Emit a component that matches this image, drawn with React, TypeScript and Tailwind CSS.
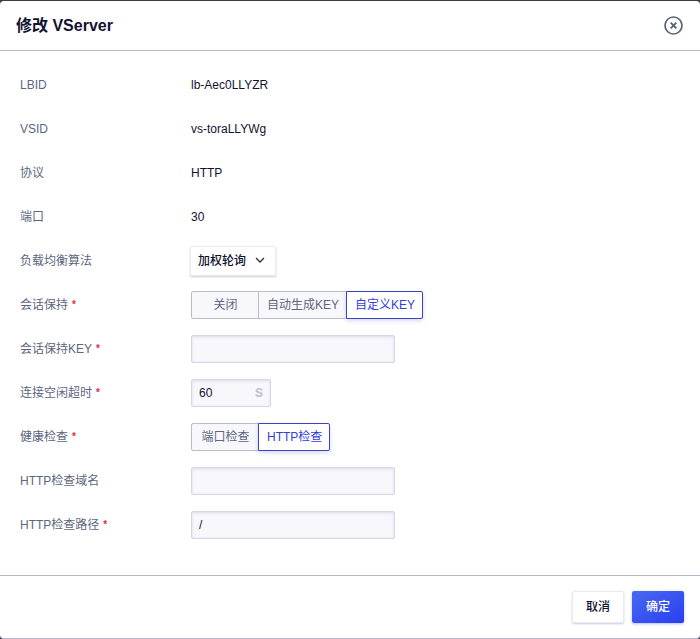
import { useState, type ReactNode } from "react";

const FONT = "font-['Liberation_Sans','Noto_Sans_CJK_SC',sans-serif]";

const FIELD =
  "h-7 rounded-xs border border-[#d5d5e8] bg-[#f7f7fc] px-[7px] text-xs text-[#111330] shadow-[inset_0_1px_3px_rgba(90,90,170,0.16)] outline-none";

function Row({
  label,
  htmlFor,
  required,
  children,
}: {
  label: string;
  htmlFor?: string;
  required?: boolean;
  children: ReactNode;
}) {
  const text = (
    <>
      {label}
      {required && <span className="ml-1 align-[1px] text-[10px] font-bold text-[#e02d3c]">*</span>}
    </>
  );
  return (
    <div className="flex min-h-7 items-center">
      {htmlFor ? (
        <label htmlFor={htmlFor} className="w-[171px] shrink-0 text-[#5c6680]">
          {text}
        </label>
      ) : (
        <span className="w-[171px] shrink-0 text-[#5c6680]">{text}</span>
      )}
      {children}
    </div>
  );
}

function Segmented({
  name,
  label,
  options,
  initial,
}: {
  name: string;
  label: string;
  options: string[];
  initial: string;
}) {
  const [value, setValue] = useState(initial);
  return (
    <div role="radiogroup" aria-label={label} className="flex h-7">
      {options.map((option) => (
        <label
          key={option}
          className={
            "relative -ml-px flex min-w-17 cursor-pointer items-center justify-center border pr-[7px] pl-2 first:ml-0 first:rounded-l-xs last:rounded-r-xs " +
            (value === option
              ? "z-10 border-[#3a43c4] bg-white text-[#3440dc] shadow-[0_2px_4px_rgba(60,70,220,0.2)]"
              : "border-[#b9bccb] bg-[#f7f7fc] text-[#5c6680]")
          }
        >
          <input
            type="radio"
            name={name}
            value={option}
            checked={value === option}
            onChange={() => setValue(option)}
            className="sr-only"
          />
          {option}
        </label>
      ))}
    </div>
  );
}

export default function App() {
  return (
    <div className="bg-[#3c3c48] pt-px">
      <form
        aria-labelledby="dialog-title"
        onSubmit={(e) => e.preventDefault()}
        className={"rounded-sm border-b border-[#b4b9cd] bg-white text-xs text-[#111330] " + FONT}
      >
        <header className="flex h-[50px] items-center justify-between border-b border-[#b3b8c2] px-4">
          <h1 id="dialog-title" className="text-base font-semibold">
            修改 VServer
          </h1>
          <button type="button" aria-label="关闭对话框" className="text-[#5c6078]">
            <svg width="21" height="20" viewBox="0 0 21 20" fill="none" stroke="currentColor">
              <circle cx="10.5" cy="9.5" r="8.5" strokeWidth="1.7" />
              <path d="M7.7 6.7l5.6 5.6M13.3 6.7l-5.6 5.6" strokeWidth="1.9" />
            </svg>
          </button>
        </header>

        <div className="flex flex-col gap-4 px-5 pt-5 pb-9">
          <Row label="LBID">
            <span>lb-Aec0LLYZR</span>
          </Row>
          <Row label="VSID">
            <span>vs-toraLLYWg</span>
          </Row>
          <Row label="协议">
            <span>HTTP</span>
          </Row>
          <Row label="端口">
            <span>30</span>
          </Row>
          <Row label="负载均衡算法" htmlFor="algorithm">
            <div className="relative -my-px -ml-px">
              <select
                id="algorithm"
                className="block h-[30px] w-[86px] appearance-none rounded-xs border border-[#ebebf3] bg-white pl-[7px] font-medium shadow-[0_1px_2px_rgba(50,50,100,0.25)] outline-none"
              >
                <option>加权轮询</option>
              </select>
              <svg
                className="pointer-events-none absolute top-[11px] right-[11px]"
                width="10"
                height="7"
                viewBox="0 0 10 7"
                fill="none"
                stroke="#2b2d42"
                strokeWidth="1.3"
              >
                <path d="M1 1l4 4 4-4" />
              </svg>
            </div>
          </Row>
          <Row label="会话保持" required>
            <Segmented
              name="session"
              label="会话保持"
              options={["关闭", "自动生成KEY", "自定义KEY"]}
              initial="自定义KEY"
            />
          </Row>
          <Row label="会话保持KEY" htmlFor="session-key" required>
            <input id="session-key" type="text" className={"w-51 " + FIELD} />
          </Row>
          <Row label="连接空闲超时" htmlFor="idle-timeout" required>
            <div className={"flex w-20 items-center " + FIELD}>
              <input
                id="idle-timeout"
                type="text"
                inputMode="numeric"
                defaultValue="60"
                className="w-full min-w-0 bg-transparent outline-none"
              />
              <span className="font-bold text-[#b9bfd0]">S</span>
            </div>
          </Row>
          <Row label="健康检查" required>
            <Segmented
              name="health"
              label="健康检查"
              options={["端口检查", "HTTP检查"]}
              initial="HTTP检查"
            />
          </Row>
          <Row label="HTTP检查域名" htmlFor="check-domain">
            <input id="check-domain" type="text" className={"w-51 " + FIELD} />
          </Row>
          <Row label="HTTP检查路径" htmlFor="check-path" required>
            <input id="check-path" type="text" defaultValue="/" className={"w-51 " + FIELD} />
          </Row>
        </div>

        <footer className="flex justify-end gap-2 border-t border-[#b4b9cd] px-4 py-[15px] font-medium">
          <button
            type="button"
            className="h-8 w-[52px] rounded-xs border border-[#ebebf3] bg-white shadow-[0_1px_2px_rgba(50,50,100,0.25)]"
          >
            取消
          </button>
          <button
            type="submit"
            className="h-8 w-[52px] rounded-xs bg-linear-to-br from-[#4b68f0] to-[#2a3df0] text-white shadow-[0_1px_3px_rgba(42,61,240,0.35)]"
          >
            确定
          </button>
        </footer>
      </form>
    </div>
  );
}
